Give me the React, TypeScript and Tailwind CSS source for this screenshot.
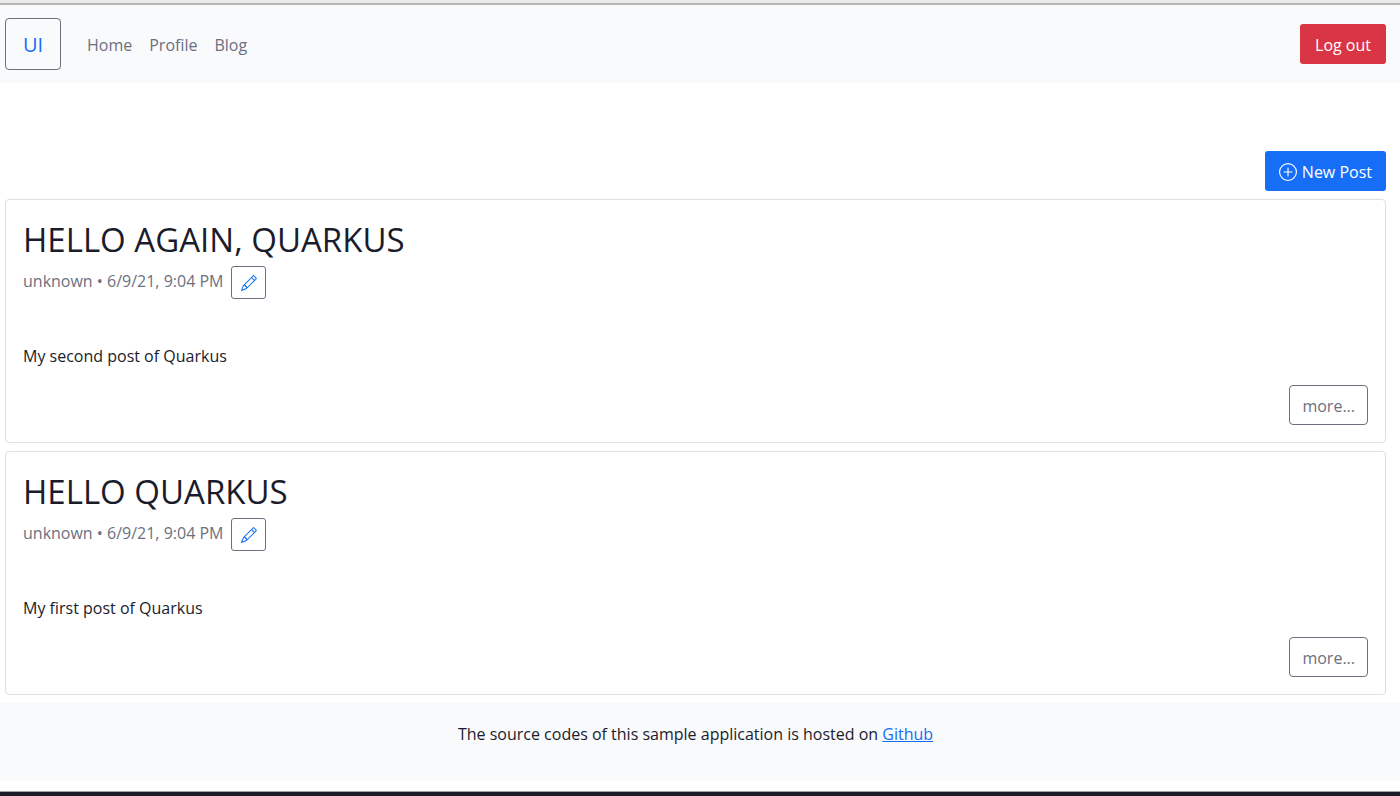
import { BsPencil, BsPlusCircle } from "react-icons/bs";

const navLinks = ["Home", "Profile", "Blog"];

const posts = [
  { title: "HELLO AGAIN, QUARKUS", author: "unknown", date: "6/9/21, 9:04 PM", body: "My second post of Quarkus" },
  { title: "HELLO QUARKUS", author: "unknown", date: "6/9/21, 9:04 PM", body: "My first post of Quarkus" },
];

type Post = (typeof posts)[number];

function PostCard({ post }: { post: Post }) {
  return (
    <article className="rounded border border-[#dfdfdf] px-[17px] pt-[18px] pb-[17px]">
      <h2 className="text-[33px] leading-[44px]">{post.title}</h2>
      <div className="mt-1 flex h-[34px] items-start gap-2 text-[#6c7080]">
        <span className="leading-[30px]">
          {post.author} • {post.date}
        </span>
        <button
          type="button"
          aria-label={`Edit ${post.title}`}
          className="flex h-[33px] w-[35px] items-center justify-center rounded-[3px] border border-[#6c7080] text-[#156ef5]"
        >
          <BsPencil size={16} />
        </button>
      </div>
      <p className="mt-[43px] leading-[26px]">{post.body}</p>
      <div className="mt-4 flex justify-end">
        <button type="button" className="h-10 rounded border border-[#6c7080] px-3 pt-px leading-[26px] text-[#6c7080]">
          more...
        </button>
      </div>
    </article>
  );
}

export default function App() {
  return (
    <div className="flex min-h-screen flex-col bg-white font-['Open_Sans','Noto_Sans',sans-serif] text-base text-[#1b1c2b]">
      <div className="h-[5px] border-b-2 border-[#b5b5b5] bg-[#e9e9e9]" />
      <header className="flex h-[78px] items-center bg-[#f9fafc] pr-[14px] pl-[5px]">
        <a
          href="#"
          className="flex h-[52px] w-14 items-center justify-center rounded border border-[#6c7080] pt-px text-xl text-[#156ef5]"
        >
          UI
        </a>
        <nav className="ml-[26px] flex gap-[17px] pt-[2px] text-[#6c7080]">
          {navLinks.map((label) => (
            <a key={label} href="#">
              {label}
            </a>
          ))}
        </nav>
        <button type="button" className="ml-auto h-10 rounded-[3px] bg-[#d93545] px-[15px] pt-px text-white">
          Log out
        </button>
      </header>
      <main className="flex flex-col gap-2 pt-[68px] pr-[14px] pb-2 pl-[5px]">
        <button
          type="button"
          className="flex h-10 items-center gap-[5px] self-end rounded-[3px] bg-[#156ef5] px-[14px] pt-px text-white"
        >
          <BsPlusCircle size={18} />
          New Post
        </button>
        {posts.map((post) => (
          <PostCard key={post.title} post={post} />
        ))}
      </main>
      <footer className="h-[78px] bg-[#f9fafc] pt-[18px] pr-[14px] pl-[5px] text-center leading-[26px]">
        The source codes of this sample application is hosted on{" "}
        <a href="#" className="text-[#156ef5] underline">
          Github
        </a>
      </footer>
      <div className="mt-auto h-[5px] border-t border-[#a0a0a0] bg-[#1b1b29]" />
    </div>
  );
}
